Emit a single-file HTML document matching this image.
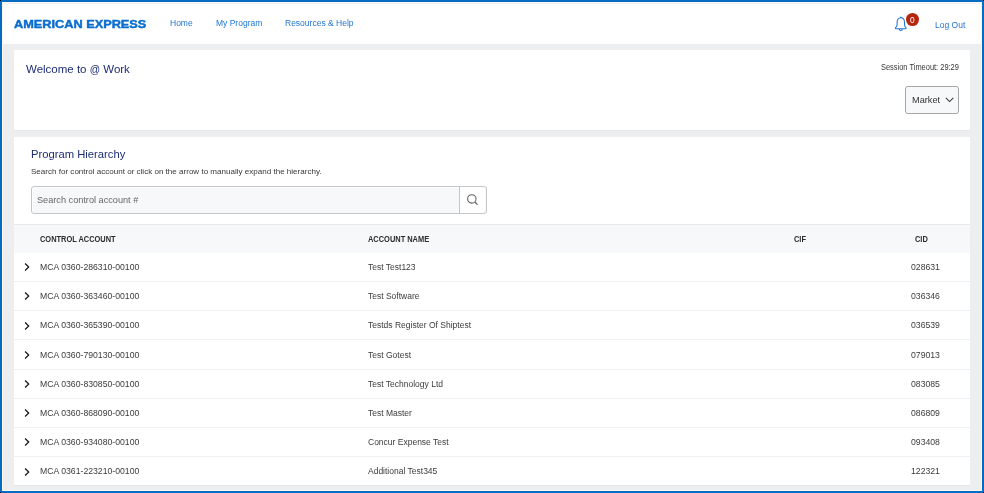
<!DOCTYPE html>
<html><head><meta charset="utf-8">
<style>
*{margin:0;padding:0;box-sizing:border-box}
html,body{width:984px;height:493px;overflow:hidden}
body{position:relative;background:#eceef0;font-family:"Liberation Sans",sans-serif;color:#333}
.a{position:absolute;white-space:nowrap;line-height:1;will-change:transform}
#frame{position:absolute;left:0;top:0;width:984px;height:493px;border:2px solid #056cc3;z-index:10;pointer-events:none}
#hdr{position:absolute;left:2px;top:2px;width:980px;height:42px;background:#fff}
.card{position:absolute;left:14px;width:956px;background:#fff;border-radius:1px;box-shadow:0 1px 1px rgba(0,0,0,0.03)}
.nav{font-size:8.5px;color:#1f73d2}
.row{position:absolute;left:14px;width:956px;height:29.2px;border-top:1px solid #eef0f2}
.cell{font-size:8.68px;color:#3b3b3b}
.th{font-size:7.45px;font-weight:700;color:#2c2c2c;transform:scaleY(1.1);transform-origin:0 0}
.chev{position:absolute;left:24px;width:6px;height:8px}
</style></head>
<body>
<div id="hdr"></div>
<div class="a" style="left:3px;top:3px;width:978px;height:1px;background:#f1f2f2"></div>
<div class="a" id="logo" style="left:13.6px;top:20px;font-size:10.2px;font-weight:700;color:#0a6dcf;transform-origin:0 0;transform:scaleX(1.25);-webkit-text-stroke:0.4px #0a6dcf">AMERICAN EXPRESS</div>
<div class="a nav" style="left:170px;top:19px">Home</div>
<div class="a nav" style="left:215.5px;top:19px">My Program</div>
<div class="a nav" style="left:284.6px;top:19px">Resources &amp; Help</div>
<div class="a nav" style="left:935px;top:20.8px">Log Out</div>

<div class="card" style="top:50px;height:80px"></div>
<div class="a" style="left:26px;top:64px;font-size:11.5px;color:#1d2d74">Welcome to <span style="font-size:10.2px;position:relative;top:-0.5px">@</span> Work</div>
<div class="a" style="left:881px;top:63px;font-size:7.46px;color:#383838;transform:scaleY(1.1);transform-origin:0 0">Session Timeout: 29:29</div>
<div class="a" style="left:905px;top:86px;width:54px;height:28px;border:1px solid #a6a6a6;border-radius:3px;background:#f7f8f9"></div>
<div class="a" style="left:911.6px;top:95.8px;font-size:9.2px;color:#333">Market</div>

<div class="card" style="top:137px;height:348px"></div>
<div class="a" style="left:31px;top:148.5px;font-size:11.24px;color:#1d2d74">Program Hierarchy</div>
<div class="a" style="left:30.7px;top:168px;font-size:8.06px;color:#383838">Search for control account or click on the arrow to manually expand the hierarchy.</div>
<div class="a" style="left:31px;top:186px;width:456px;height:28px;border:1px solid #c6c6c8;border-radius:3px;background:#f7f8f9;box-shadow:inset 1px 1px 0 #fff"></div>
<div class="a" style="left:459px;top:187px;width:26px;height:26px;border-left:1px solid #c4c4c4;background:#fff;border-radius:0 2px 2px 0"></div>
<div class="a" style="left:37.3px;top:195.6px;font-size:9.17px;color:#666">Search control account #</div>

<div class="a" style="left:14px;top:224px;width:956px;height:28.6px;background:#f7f8f9;border-top:1px solid #e6e8ea"></div>
<div class="a th" style="left:40px;top:235.1px">CONTROL ACCOUNT</div>
<div class="a th" style="left:368px;top:235.1px">ACCOUNT NAME</div>
<div class="a th" style="left:794px;top:235.1px">CIF</div>
<div class="a th" style="left:915px;top:235.1px">CID</div>

<svg class="a" style="left:893px;top:15px;width:16px;height:18px" viewBox="0 0 16 18"><path d="M7.8 2.7C5.3 2.7 4.1 4.9 4.1 7.5L4.1 9.4C4.1 11 3.3 12 2.6 12.6C2.1 13 2.4 13.7 3.1 13.7L12.5 13.7C13.2 13.7 13.5 13 13 12.6C12.3 12 11.5 11 11.5 9.4L11.5 7.5C11.5 4.9 10.3 2.7 7.8 2.7ZM6.3 14C6.3 16.1 9.3 16.1 9.3 14" fill="none" stroke="#1f73d2" stroke-width="1.05"/><path d="M6.8 3L7.8 1.2L8.8 3Z" fill="#1f73d2"/></svg>
<div class="a" style="left:906.1px;top:13.4px;width:13px;height:12.8px;border-radius:50%;background:#b5260f"></div>
<div class="a" style="left:910.2px;top:16.3px;font-size:8.3px;color:#fff">0</div>
<svg class="a" style="left:944px;top:96px;width:11px;height:8px" viewBox="0 0 11 8"><path d="M1.9 1.9L5.6 5.6L9.3 1.9" fill="none" stroke="#3a3a3a" stroke-width="1.05"/></svg>
<svg class="a" style="left:464px;top:191px;width:16px;height:16px" viewBox="0 0 16 16"><circle cx="7.8" cy="7.9" r="4.2" fill="none" stroke="#5f5f5f" stroke-width="1.05"/><path d="M10.8 11L13.5 13.7" stroke="#5f5f5f" stroke-width="1.15"/></svg>
<svg class="chev" style="top:263.2px" viewBox="0 0 6 8"><path d="M1.1 0.5L4.7 4L1.1 7.5" fill="none" stroke="#111" stroke-width="1.2"/></svg>
<div class="a cell" style="left:40px;top:263.0px">MCA 0360-286310-00100</div>
<div class="a cell" style="font-size:8.5px;left:368px;top:263.0px">Test Test123</div>
<div class="a cell" style="left:911px;top:263.0px">028631</div>
<div class="a" style="left:14px;top:281.0px;width:956px;height:1px;background:#eef0f2"></div>
<svg class="chev" style="top:292.4px" viewBox="0 0 6 8"><path d="M1.1 0.5L4.7 4L1.1 7.5" fill="none" stroke="#111" stroke-width="1.2"/></svg>
<div class="a cell" style="left:40px;top:292.2px">MCA 0360-363460-00100</div>
<div class="a cell" style="font-size:8.5px;left:368px;top:292.2px">Test Software</div>
<div class="a cell" style="left:911px;top:292.2px">036346</div>
<div class="a" style="left:14px;top:310.2px;width:956px;height:1px;background:#eef0f2"></div>
<svg class="chev" style="top:321.6px" viewBox="0 0 6 8"><path d="M1.1 0.5L4.7 4L1.1 7.5" fill="none" stroke="#111" stroke-width="1.2"/></svg>
<div class="a cell" style="left:40px;top:321.4px">MCA 0360-365390-00100</div>
<div class="a cell" style="font-size:8.5px;left:368px;top:321.4px">Testds Register Of Shiptest</div>
<div class="a cell" style="left:911px;top:321.4px">036539</div>
<div class="a" style="left:14px;top:339.4px;width:956px;height:1px;background:#eef0f2"></div>
<svg class="chev" style="top:350.8px" viewBox="0 0 6 8"><path d="M1.1 0.5L4.7 4L1.1 7.5" fill="none" stroke="#111" stroke-width="1.2"/></svg>
<div class="a cell" style="left:40px;top:350.6px">MCA 0360-790130-00100</div>
<div class="a cell" style="font-size:8.5px;left:368px;top:350.6px">Test Gotest</div>
<div class="a cell" style="left:911px;top:350.6px">079013</div>
<div class="a" style="left:14px;top:368.6px;width:956px;height:1px;background:#eef0f2"></div>
<svg class="chev" style="top:380.0px" viewBox="0 0 6 8"><path d="M1.1 0.5L4.7 4L1.1 7.5" fill="none" stroke="#111" stroke-width="1.2"/></svg>
<div class="a cell" style="left:40px;top:379.8px">MCA 0360-830850-00100</div>
<div class="a cell" style="font-size:8.5px;left:368px;top:379.8px">Test Technology Ltd</div>
<div class="a cell" style="left:911px;top:379.8px">083085</div>
<div class="a" style="left:14px;top:397.8px;width:956px;height:1px;background:#eef0f2"></div>
<svg class="chev" style="top:409.1px" viewBox="0 0 6 8"><path d="M1.1 0.5L4.7 4L1.1 7.5" fill="none" stroke="#111" stroke-width="1.2"/></svg>
<div class="a cell" style="left:40px;top:408.9px">MCA 0360-868090-00100</div>
<div class="a cell" style="font-size:8.5px;left:368px;top:408.9px">Test Master</div>
<div class="a cell" style="left:911px;top:408.9px">086809</div>
<div class="a" style="left:14px;top:427.0px;width:956px;height:1px;background:#eef0f2"></div>
<svg class="chev" style="top:438.3px" viewBox="0 0 6 8"><path d="M1.1 0.5L4.7 4L1.1 7.5" fill="none" stroke="#111" stroke-width="1.2"/></svg>
<div class="a cell" style="left:40px;top:438.1px">MCA 0360-934080-00100</div>
<div class="a cell" style="font-size:8.5px;left:368px;top:438.1px">Concur Expense Test</div>
<div class="a cell" style="left:911px;top:438.1px">093408</div>
<div class="a" style="left:14px;top:456.2px;width:956px;height:1px;background:#eef0f2"></div>
<svg class="chev" style="top:467.5px" viewBox="0 0 6 8"><path d="M1.1 0.5L4.7 4L1.1 7.5" fill="none" stroke="#111" stroke-width="1.2"/></svg>
<div class="a cell" style="left:40px;top:467.3px">MCA 0361-223210-00100</div>
<div class="a cell" style="font-size:8.5px;left:368px;top:467.3px">Additional Test345</div>
<div class="a cell" style="left:911px;top:467.3px">122321</div>
<div id="frame"></div>
<div class="a" style="left:2px;top:2px;width:980px;height:489px;border:1px solid #fcf7f1;z-index:9"></div>
<div class="a" style="left:0;top:0;width:1px;height:1px;background:#000;z-index:11"></div>
<div class="a" style="left:983px;top:0;width:1px;height:1px;background:#000;z-index:11"></div>
<div class="a" style="left:0;top:492px;width:1px;height:1px;background:#000;z-index:11"></div>
<div class="a" style="left:983px;top:492px;width:1px;height:1px;background:#000;z-index:11"></div>
</body></html>
